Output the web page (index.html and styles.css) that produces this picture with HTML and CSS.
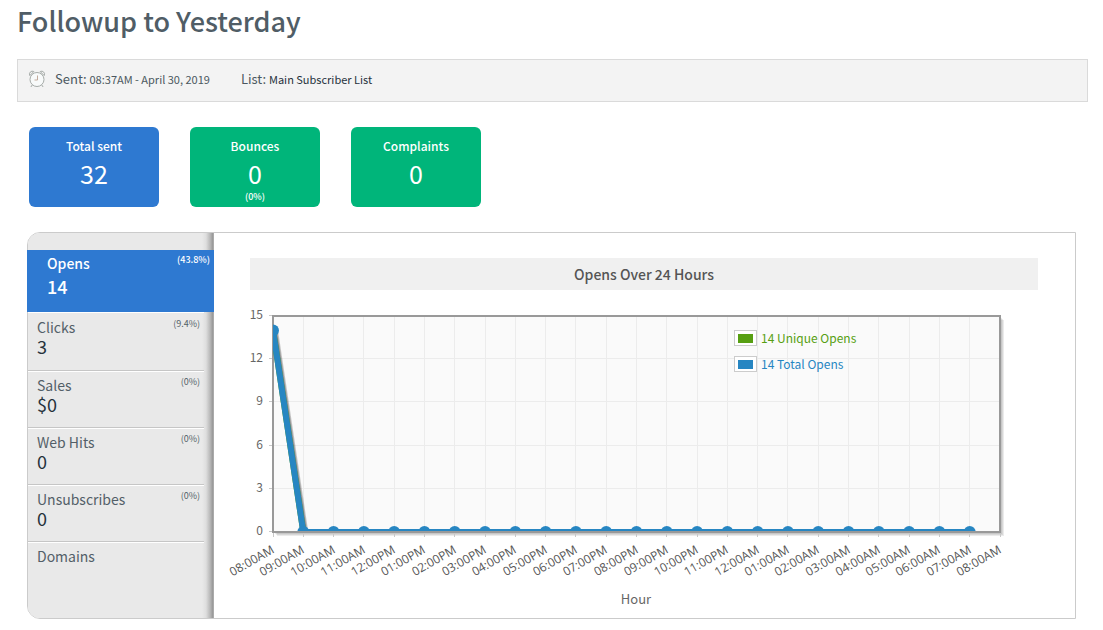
FILE: index.html
```html
<!DOCTYPE html>
<html lang="en">
<head>
<meta charset="utf-8">
<title>Followup to Yesterday</title>
<link rel="stylesheet" href="styles.css">
</head>
<body>
<main class="page">
  <h1 class="page-title">Followup to Yesterday</h1>
  <div class="meta">
    <svg class="clock" viewBox="0 0 18 18" aria-hidden="true">
      <circle cx="9" cy="9.5" r="7"/>
      <path d="M1.8 5.6A3 3 0 0 1 5.8 1.5M16.2 5.6A3 3 0 0 0 12.2 1.5M1.8 5.6L5.8 1.5M16.2 5.6L12.2 1.5M4.2 15L2.9 17M13.8 15L15.1 17"/>
      <path class="hands" d="M9.5 5.5V10H6.5"/>
    </svg>
    <span class="meta-item">Sent: <small>08:37AM - April 30, 2019</small></span>
    <span class="meta-item">List: <small class="dark">Main Subscriber List</small></span>
  </div>
  <section class="cards">
    <div class="card card-blue"><span class="card-label">Total sent</span><span class="card-value">32</span></div>
    <div class="card"><span class="card-label">Bounces</span><span class="card-value">0</span><span class="card-note">(0%)</span></div>
    <div class="card"><span class="card-label">Complaints</span><span class="card-value">0</span></div>
  </section>
  <section class="panel">
    <nav class="tabs">
      <a class="tab active" href="#opens"><span class="tab-name">Opens</span><span class="tab-rate">(43.8%)</span><span class="tab-value">14</span></a>
      <a class="tab" href="#clicks"><span class="tab-name">Clicks</span><span class="tab-rate">(9.4%)</span><span class="tab-value">3</span></a>
      <a class="tab" href="#sales"><span class="tab-name">Sales</span><span class="tab-rate">(0%)</span><span class="tab-value">$0</span></a>
      <a class="tab" href="#hits"><span class="tab-name">Web Hits</span><span class="tab-rate">(0%)</span><span class="tab-value">0</span></a>
      <a class="tab" href="#unsubscribes"><span class="tab-name">Unsubscribes</span><span class="tab-rate">(0%)</span><span class="tab-value">0</span></a>
      <a class="tab last" href="#domains"><span class="tab-name">Domains</span></a>
    </nav>
    <div class="report">
      <h2 class="report-title">Opens Over 24 Hours</h2>
      <svg class="chart" id="chart" viewBox="0 0 861 320" role="img" aria-label="Opens over 24 hours"></svg>
    </div>
  </section>
</main>
<script src="chart.js"></script>
</body>
</html>
```
FILE: styles.css
```css
* { box-sizing: border-box; }
body {
  margin: 0;
  background: #fff;
  color: #4b5860;
  font-family: "Noto Sans CJK SC", "Open Sans", sans-serif;
}
.page { padding: 0 15px 0 17px; }
.page-title {
  margin: 0 0 17px;
  font-size: 27px;
  line-height: 42px;
  font-weight: 500;
  color: #505d66;
}
.meta {
  display: flex;
  align-items: center;
  height: 43px;
  padding: 0 10px 4px;
  border: 1px solid #dadada;
  background: #f3f3f3;
  font-size: 13px;
}
.meta-item { margin-right: 31px; }
.meta small { font-size: 11px; }
.meta .dark { color: #26323c; }
.clock {
  width: 18px;
  height: 18px;
  margin-right: 9px;
  fill: none;
  stroke: #a6aca9;
  stroke-width: 1;
}
.clock circle { fill: #f8fafa; }
.clock .hands { stroke: #c3ab9c; }

.cards { display: flex; gap: 31px; padding: 25px 12px; }
.card {
  display: flex;
  flex-direction: column;
  align-items: center;
  width: 130px;
  height: 80px;
  padding-top: 9px;
  border-radius: 6px;
  background: #00b57a;
  color: #fff;
}
.card-blue { background: #2e79d1; }
.card-label { font-size: 12px; line-height: 20px; font-weight: 500; }
.card-value { font-size: 25px; line-height: 34px; }
.card-note { font-size: 9px; line-height: 14px; font-weight: 500; }

.panel {
  display: flex;
  margin: 0 12px 0 10px;
  border: 1px solid #cbcbcb;
  border-radius: 13px 0 0 13px;
}
.tabs {
  display: flex;
  flex-direction: column;
  flex: none;
  width: 186px;
  padding-top: 17px;
  border-right: 1px solid #aaa;
  border-radius: 12px 0 0 12px;
  background: linear-gradient(to left, #959595 0, #b9b9b9 3px, #dedede 7px, #e9e9e9 11px) #e9e9e9;
}
.tab {
  display: grid;
  grid-template-columns: 1fr auto;
  grid-template-rows: 20px 18px;
  align-content: start;
  height: 57px;
  margin-right: 9px;
  padding: 3px 4px 0 9px;
  border-top: 1px solid #fff;
  border-bottom: 1px solid #c6c6c6;
  color: #535f68;
  text-decoration: none;
}
.tab-name { font-size: 14px; line-height: 20px; }
.tab-rate { font-size: 9px; line-height: 14px; }
.tab-value { grid-column: 1; font-size: 18px; line-height: 18px; color: #26323c; }
.tab.active {
  grid-template-rows: 20px 27px;
  height: 62px;
  margin: 0 -1px 0 -1px;
  padding: 3px 4px 0 20px;
  border: 0;
  background: #2e79d1;
  color: #fff;
}
.active .tab-name { font-weight: 500; }
.active .tab-rate { font-weight: 500; }
.active .tab-value { color: #fff; font-weight: 500; line-height: 27px; }
.active + .tab { height: 59px; padding-top: 4px; }
.tab.last { border-bottom: 0; }

.report { flex: 1; min-width: 0; padding-top: 25px; }
.report-title {
  margin: 0 37px 0 36px;
  background: #f0f0f0;
  color: #555;
  font-size: 14px;
  line-height: 32px;
  font-weight: 500;
  text-align: center;
}
.chart { display: block; width: 100%; height: auto; margin-top: 8px; }
.plot { fill: #fafafa; stroke: #999; stroke-width: 2; }
.plot-shadow { fill: #000; opacity: 0.08; }
.grid { stroke: #ececec; stroke-width: 1; }
.tick { stroke: #c8c8c8; stroke-width: 1; }
.line { fill: none; stroke: #2786c2; stroke-width: 6; }
.line-shadow { fill: none; stroke: #000; stroke-width: 5; opacity: 0.2; }
.line-under { fill: none; stroke: #579f12; stroke-width: 6; }
.dot { fill: #2786c2; }
.y-label { font-size: 12px; fill: #666; text-anchor: end; }
.x-label { font-family: "Open Sans", sans-serif; font-size: 12px; fill: #555; text-anchor: end; }
.axis-name { font-size: 13px; fill: #666; text-anchor: middle; }
.legend-text { font-size: 12px; }
.legend-box { fill: #fff; stroke: #ccc; }
.green { fill: #579f12; }
.blue { fill: #2786c2; }
```
FILE: chart.js
```javascript
const chart = document.getElementById("chart");
const opens = [14].concat(new Array(23).fill(0));
const left = 59, right = 786, top_ = 18, bottom = 234;

function add(name, attrs, text, parent = chart) {
  const el = document.createElementNS("http://www.w3.org/2000/svg", name);
  for (const key in attrs) el.setAttribute(key, attrs[key]);
  if (text) el.textContent = text;
  parent.appendChild(el);
  return el;
}
const xAt = i => left + (right - left) * i / 24;
const yAt = v => bottom - (bottom - top_) * v / 15;
const crisp = n => Math.floor(n) + 0.5;

for (const d of [2, 3, 4]) {
  add("rect", { class: "plot-shadow", x: left + d, y: top_ + d, width: right - left, height: bottom - top_ });
}
add("rect", { class: "plot", x: left, y: top_, width: right - left, height: bottom - top_ });

for (let i = 0; i <= 24; i++) {
  const x = crisp(xAt(i));
  if (i > 0 && i < 24) add("line", { class: "grid", x1: x, x2: x, y1: top_ + 1, y2: bottom - 1 });
  add("line", { class: "tick", x1: x, x2: x, y1: bottom + 1, y2: bottom + 5 });
  const hour = (i + 8) % 24;
  const label = String(hour % 12 || 12).padStart(2, "0") + ":00" + (hour < 12 ? "AM" : "PM");
  add("text", { class: "x-label", transform: `translate(${Math.round(xAt(i)) + 2} 254) rotate(-30)` }, label);
}
for (let v = 0; v <= 15; v += 3) {
  const y = crisp(yAt(v) - 0.5);
  if (v > 0 && v < 15) add("line", { class: "grid", x1: left + 1, x2: right - 1, y1: y, y2: y });
  add("line", { class: "tick", x1: left - 4, x2: left - 1, y1: y, y2: y });
  add("text", { class: "y-label", x: left - 10, y: Math.round(yAt(v)) + 3 }, String(v));
}

const clip = add("clipPath", { id: "plot-area" });
add("rect", { x: left, y: top_, width: right - left, height: bottom - top_ }, "", clip);
const series = add("g", { "clip-path": "url(#plot-area)" });
const points = opens.map((v, i) => `${xAt(i)},${yAt(v)}`).join(" ");
for (const d of [1, 2, 3]) {
  add("polyline", { class: "line-shadow", points, transform: `translate(${d} ${d})` }, "", series);
}
add("polyline", { class: "line-under", points }, "", series);
add("polyline", { class: "line", points }, "", series);
opens.forEach((v, i) => add("circle", { class: "dot", cx: xAt(i), cy: yAt(v), r: 6 }, "", series));
add("path", { d: `M${left - 1} ${bottom}H${right + 1}`, stroke: "#999", "stroke-width": 2 });

[["green", "14 Unique Opens", 32], ["blue", "14 Total Opens", 58]].forEach(([color, text, y]) => {
  add("rect", { class: "legend-box", x: 520.5, y: y + 0.5, width: 22, height: 15 });
  add("rect", { class: color, x: 524, y: y + 4, width: 15, height: 9 });
  add("text", { class: `legend-text ${color}`, x: 547, y: y + 13 }, text);
});
add("text", { class: "axis-name", x: 422, y: 306 }, "Hour");
```
